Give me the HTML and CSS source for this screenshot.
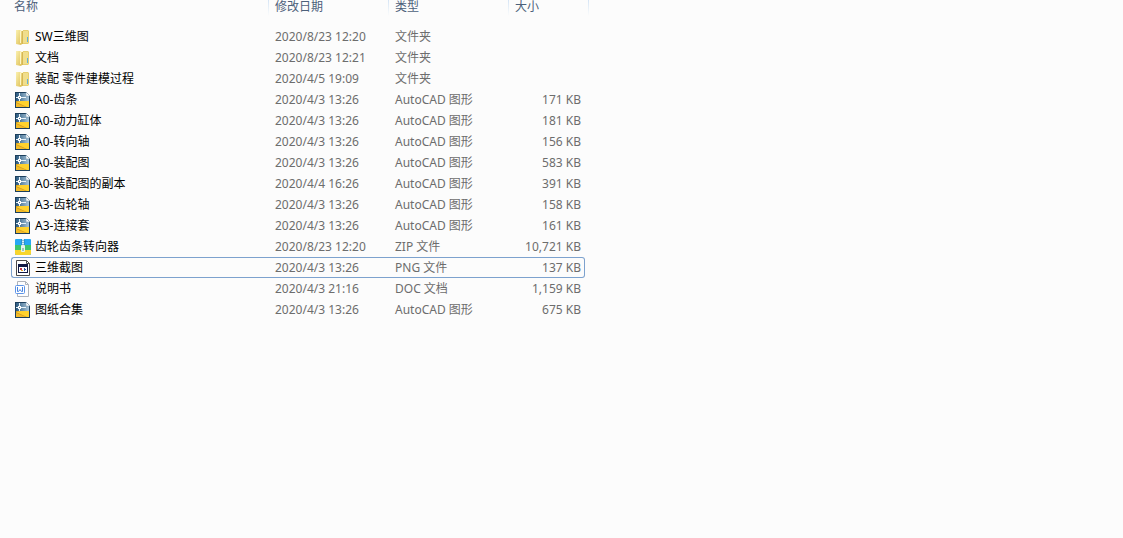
FILE: index.html
```html
<!DOCTYPE html>
<html lang="zh-CN">
    <head>
        <meta charset="utf-8">
        <title>文件列表</title>
        <link rel="stylesheet" href="styles.css">
    </head>
    <body>
        <svg class="sprite" width="0" height="0" aria-hidden="true">
            <defs>
                <linearGradient id="gold" x1="0" y1="0" x2="1" y2="1">
                    <stop offset="0" stop-color="#fbf1b0"/>
                    <stop offset="1" stop-color="#dcbd52"/>
                </linearGradient>
                <linearGradient id="sky" x1="0" y1="0" x2="1" y2="0">
                    <stop offset="0" stop-color="#2c5a80"/>
                    <stop offset="1" stop-color="#a9c6da"/>
                </linearGradient>
                <symbol id="folder" viewBox="0 0 16 16">
                    <path d="M7 1h6l1 1v12l-1 1H7z" fill="#e6cf70"/>
                    <path d="M8 2h5v12H8z" fill="#f0de8c"/>
                    <path d="M4 1h4v13H4z" fill="#fffbe2"/>
                    <path d="M12 8h1v5h-1z" fill="#5fb0dc"/>
                    <path d="M1 1h4l1 1h1v13l-1 1-5-1z" fill="url(#gold)"/>
                    <path d="M5 2h1v12H5z" fill="#fdf6c8"/>
                    <path d="M7 2h1v13H7z" fill="#d5b655"/>
                </symbol>
                <symbol id="dwg" viewBox="0 0 16 16">
                    <path d="M0 0h11l4 4v12H0z" fill="#1c3f5c"/>
                    <path d="M1 1h10v3h3v6H1z" fill="url(#sky)"/>
                    <path d="M4 1h1v8H4zM1 5h10v1H1z" fill="#eaf4fa"/>
                    <path d="M3 4h3v3H3z" fill="#fff"/>
                    <path d="M4 5h1v1H4z" fill="#4a7395"/>
                    <path d="M11 0l4 4h-4z" fill="#fff" stroke="#6f8ea7" stroke-width=".5"/>
                    <path d="M1 9h5l2 1 6-1v6H1z" fill="#d09a25"/>
                    <path d="M6 9h8v6h-2L1 10z" fill="#ffd22e"/>
                    <path d="M1 11l10 4H1z" fill="#f3bb27"/>
                </symbol>
                <symbol id="zip" viewBox="0 0 16 16">
                    <rect width="16" height="16" rx="1" fill="#26a8f4"/>
                    <path d="M0 6h16v5H0z" fill="#3cc66c"/>
                    <path d="M0 11h16v4l-1 1H1l-1-1z" fill="#f7d52d"/>
                    <path d="M6 0h4v8H6z" fill="#2a93d2"/>
                    <path d="M7 0h2v7H7z" fill="#d7eff9"/>
                    <path d="M7 1.500h2M7 3.500h2M7 5.500h2" stroke="#8bbcd3"/>
                    <rect x="6" y="6" width="4" height="7" rx="1" fill="#e8f3ee"/>
                    <path d="M7 9h2v3H7z" fill="#9fc5b4"/>
                </symbol>
                <symbol id="png" viewBox="0 0 16 16">
                    <path d="M1.500.5h10l3 3v12h-13z" fill="#fff" stroke="#4b4b4b"/>
                    <path d="M11.500.5v3h3" fill="none" stroke="#4b4b4b"/>
                    <path d="M3 4h10v9H3z" fill="#111943"/>
                    <path d="M4 7h8v5H4z" fill="#fff"/>
                    <path d="M5 8h2v2H5z" fill="#c6374b"/>
                    <path d="M6 10h2v1H6z" fill="#e0a22b"/>
                    <path d="M9 8h1v3H9zM10 9h1v1h-1z" fill="#284b9c"/>
                </symbol>
                <symbol id="doc" viewBox="0 0 16 16">
                    <path d="M2.500.5h8l3 3v12h-11z" fill="#fdfdfd" stroke="#aeb3bb"/>
                    <path d="M10.500.5v3h3" fill="none" stroke="#aeb3bb"/>
                    <rect x=".5" y="4.500" width="9" height="8" rx="1" fill="#fff" stroke="#5c94e8"/>
                    <path d="M2.500 6v4.500h1L5 8.500l1.500 2h1V6" fill="none" stroke="#4784e2"/>
                </symbol>
            </defs>
        </svg>

        <table class="files">
            <colgroup>
                <col class="col-name">
                <col class="col-date">
                <col class="col-type">
                <col class="col-size">
                <col class="col-end">
            </colgroup>
            <thead>
                <tr>
                    <th scope="col">名称</th>
                    <th scope="col">修改日期</th>
                    <th scope="col">类型</th>
                    <th scope="col" colspan="2">大小</th>
                </tr>
            </thead>
            <tbody>
                <tr><td><div class="name"><svg class="icon"><use href="#folder"/></svg>SW三维图</div></td><td>2020/8/23 12:20</td><td>文件夹</td><td></td></tr>
                <tr><td><div class="name"><svg class="icon"><use href="#folder"/></svg>文档</div></td><td>2020/8/23 12:21</td><td>文件夹</td><td></td></tr>
                <tr><td><div class="name"><svg class="icon"><use href="#folder"/></svg>装配 零件建模过程</div></td><td>2020/4/5 19:09</td><td>文件夹</td><td></td></tr>
                <tr><td><div class="name"><svg class="icon"><use href="#dwg"/></svg>A0-齿条</div></td><td>2020/4/3 13:26</td><td>AutoCAD 图形</td><td>171 KB</td></tr>
                <tr><td><div class="name"><svg class="icon"><use href="#dwg"/></svg>A0-动力缸体</div></td><td>2020/4/3 13:26</td><td>AutoCAD 图形</td><td>181 KB</td></tr>
                <tr><td><div class="name"><svg class="icon"><use href="#dwg"/></svg>A0-转向轴</div></td><td>2020/4/3 13:26</td><td>AutoCAD 图形</td><td>156 KB</td></tr>
                <tr><td><div class="name"><svg class="icon"><use href="#dwg"/></svg>A0-装配图</div></td><td>2020/4/3 13:26</td><td>AutoCAD 图形</td><td>583 KB</td></tr>
                <tr><td><div class="name"><svg class="icon"><use href="#dwg"/></svg>A0-装配图的副本</div></td><td>2020/4/4 16:26</td><td>AutoCAD 图形</td><td>391 KB</td></tr>
                <tr><td><div class="name"><svg class="icon"><use href="#dwg"/></svg>A3-齿轮轴</div></td><td>2020/4/3 13:26</td><td>AutoCAD 图形</td><td>158 KB</td></tr>
                <tr><td><div class="name"><svg class="icon"><use href="#dwg"/></svg>A3-连接套</div></td><td>2020/4/3 13:26</td><td>AutoCAD 图形</td><td>161 KB</td></tr>
                <tr><td><div class="name"><svg class="icon"><use href="#zip"/></svg>齿轮齿条转向器</div></td><td>2020/8/23 12:20</td><td>ZIP 文件</td><td>10,721 KB</td></tr>
                <tr class="focused"><td><div class="name"><svg class="icon"><use href="#png"/></svg>三维截图</div></td><td>2020/4/3 13:26</td><td>PNG 文件</td><td>137 KB</td></tr>
                <tr><td><div class="name"><svg class="icon"><use href="#doc"/></svg>说明书</div></td><td>2020/4/3 21:16</td><td>DOC 文档</td><td>1,159 KB</td></tr>
                <tr><td><div class="name"><svg class="icon"><use href="#dwg"/></svg>图纸合集</div></td><td>2020/4/3 13:26</td><td>AutoCAD 图形</td><td>675 KB</td></tr>
            </tbody>
        </table>
    </body>
</html>
```

FILE: styles.css
```css
body {
    margin: 0;
    background-color: #fcfcfc;
    color: #6d6d6d;
    font-family: "Noto Sans", "Noto Sans CJK SC", sans-serif;
    font-size: 12px;
    line-height: 18px;
}

.sprite {
    position: absolute;
}

.files {
    table-layout: fixed;
    width: 578px;
    margin-left: 11px;
    border-spacing: 0;
    white-space: nowrap;
}

.col-name {
    width: 258px;
}

.col-date,
.col-type {
    width: 120px;
}

.col-size {
    width: 76px;
}

.col-end {
    width: 4px;
}

th {
    height: 26px;
    padding: 0 6px;
    color: #4c607a;
    font-weight: normal;
    line-height: 14px;
    text-align: left;
    vertical-align: top;
    background: linear-gradient(#d5e5f5, #fcfcfc) right top / 1px 16px no-repeat;
}

th:first-child {
    padding-left: 3px;
}

td {
    box-sizing: border-box;
    height: 21px;
    padding: 0 5px;
    border: 0 solid transparent;
    border-width: 1px 0;
}

td:first-child {
    padding-left: 3px;
    border-left-width: 1px;
}

td:nth-child(4) {
    padding-right: 3px;
    border-right-width: 1px;
    text-align: right;
}

td:nth-child(2),
td:nth-child(3) {
    padding-left: 6px;
}

.focused td {
    border-color: #7da2ce;
}

.focused td:first-child {
    border-radius: 3px 0 0 3px;
}

.focused td:last-child {
    border-radius: 0 3px 3px 0;
}

.name {
    display: flex;
    align-items: center;
    gap: 4px;
    color: #000;
}

.icon {
    width: 16px;
    height: 16px;
}
```
